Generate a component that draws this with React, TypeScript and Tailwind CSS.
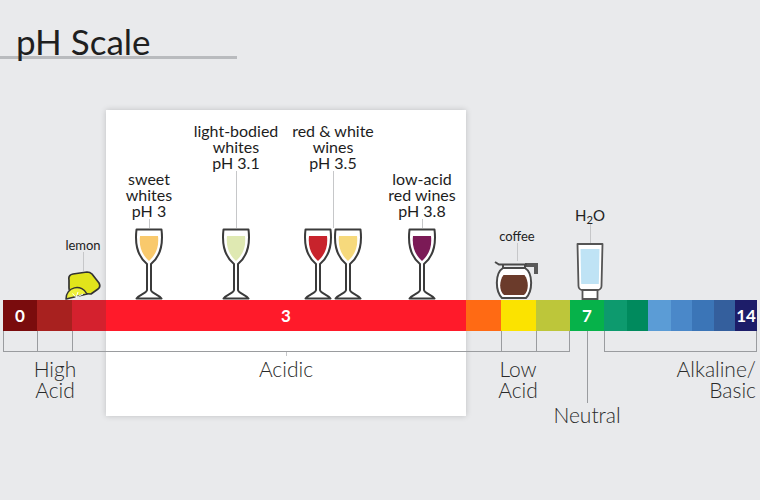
import React from "react"

const LINE = "border-[#9a9c9f]"

const segments = [
  { w: "w-[34px]", bg: "bg-[#7a0c0d]", label: "0" },
  { w: "w-[35px]", bg: "bg-[#a8211f]", label: "" },
  { w: "w-[34px]", bg: "bg-[#d4212e]", label: "" },
  { w: "w-[360px]", bg: "bg-[#ff1a2a]", label: "3" },
  { w: "w-[35px]", bg: "bg-[#ff6a14]", label: "" },
  { w: "w-[35px]", bg: "bg-[#fbe300]", label: "" },
  { w: "w-[34px]", bg: "bg-[#bdc63a]", label: "" },
  { w: "w-[34px]", bg: "bg-[#06b24a]", label: "7" },
  { w: "w-[23px]", bg: "bg-[#0d9a6e]", label: "" },
  { w: "w-[21px]", bg: "bg-[#008a5d]", label: "" },
  { w: "w-[23px]", bg: "bg-[#5b9cd6]", label: "" },
  { w: "w-[21px]", bg: "bg-[#4a88c9]", label: "" },
  { w: "w-[22px]", bg: "bg-[#3b75b7]", label: "" },
  { w: "w-[21px]", bg: "bg-[#345f9d]", label: "" },
  { w: "w-[22px]", bg: "bg-[#1d1d69]", label: "14" },
]

function WineGlass({ fill }: { fill: string }) {
  return (
    <svg width="30" height="72" viewBox="0 0 30 72" className="block">
      <path
        d="M2.5 1.5H27.5C29 14 28 27 17 36V62C17 65 24 66 27.5 70.5H2.5C6 66 13 65 13 62V36C2 27 1 14 2.5 1.5Z"
        fill="white"
        stroke="#3b3b3b"
        strokeWidth="2"
        strokeLinejoin="round"
      />
      <path d="M6 8H24C25 17 23 26 15 33C7 26 5 17 6 8Z" fill={fill} />
    </svg>
  )
}

function Lemon() {
  return (
    <svg width="38" height="29" viewBox="0 0 38 29" className="block">
      <path
        d="M5 9Q4 4 9 3L23 1Q26 1 28 3L35 12Q37 16 34 18L27 23L9 22Q5 21 5 17Z"
        fill="#e1e41b"
        stroke="#333"
        strokeWidth="1.7"
        strokeLinejoin="round"
      />
      <path d="M2 28A11 11 0 0 1 23 23Z" fill="#eef03a" stroke="#333" strokeWidth="1.5" strokeLinejoin="round" />
      <path d="M12 26.5L8.5 22.5M12 26.5L14 21M12 26.5L19 23" stroke="white" strokeWidth="1" />
    </svg>
  )
}

function CoffeePot() {
  return (
    <svg width="46" height="39" viewBox="0 0 46 39" className="block">
      <path d="M31 2H44V13H40V6H31Z" fill="#5a5a5a" />
      <path d="M1 1L5 3.5H33" stroke="#4a4a4a" strokeWidth="2" fill="none" />
      <path d="M9 3.5V7M31 3.5V7" stroke="#4a4a4a" strokeWidth="2" />
      <path
        d="M9 7C1 12 1 30 8 37H32C39 30 39 12 31 7Z"
        fill="white"
        stroke="#4a4a4a"
        strokeWidth="2"
        strokeLinejoin="round"
      />
      <path d="M9.5 14C5 20 5 30 10 34H30C35 30 35 20 30.5 14Z" fill="#6b3b2b" />
    </svg>
  )
}

function WaterGlass() {
  return (
    <svg width="28" height="57" viewBox="0 0 28 57" className="block">
      <path d="M6.5 47H21.5V56H6.5Z" fill="white" stroke="#555" strokeWidth="1.8" />
      <path
        d="M1.5 1H26.5L25.5 43C25.5 45.5 23.5 47 21.5 47H6.5C4.5 47 2.5 45.5 2.5 43Z"
        fill="white"
        stroke="#555"
        strokeWidth="1.8"
        strokeLinejoin="round"
      />
      <path d="M4.5 6H23.5L22.8 41H5.2Z" fill="#bfe3f5" />
    </svg>
  )
}

const labelText = "text-center text-[16px] leading-[16px] text-[#1d1d1d]"
const connector = "w-px bg-[#c6c7c9]"

export default function App() {
  return (
    <div className="h-[500px] w-[760px] overflow-hidden bg-[#e9eaec] font-['Lato','Liberation_Sans',sans-serif] text-[#222]">
      {/* title */}
      <header className="relative h-[60px]">
        <div className="absolute left-0 top-[56px] h-[3px] w-[237px] bg-[#b9bbbe]" />
        <h1 className="relative pl-[16px] pt-[20px] text-[35px] leading-[42px] text-[#1f1f1f]">pH Scale</h1>
      </header>

      <div className="relative h-[440px]">
        {/* highlight box */}
        <div className="absolute left-[106px] top-[50px] h-[306px] w-[360px] bg-white shadow-[0_0_6px_rgba(0,0,0,0.18)]" />

        {/* markers above the scale */}
        <div className="relative h-[240px]">
          <div className="absolute bottom-0 left-[62px] flex w-[42px] flex-col items-center">
            <span className="text-[13px] leading-[14px]">lemon</span>
            <span className={`h-[19px] ${connector}`} />
            <Lemon />
          </div>

          <div className="absolute bottom-0 left-[104px] flex w-[90px] flex-col items-center">
            <p className={labelText}>
              sweet
              <br />
              whites
              <br />
              pH 3
            </p>
            <span className={`h-[9px] ${connector}`} />
            <WineGlass fill="#f9c96c" />
          </div>

          <div className="absolute bottom-0 left-[186px] flex w-[100px] flex-col items-center">
            <p className={labelText}>
              light-bodied
              <br />
              whites
              <br />
              pH 3.1
            </p>
            <span className={`h-[57px] ${connector}`} />
            <WineGlass fill="#dfe9b2" />
          </div>

          <div className="absolute bottom-0 left-[283px] flex w-[100px] flex-col items-center">
            <p className={labelText}>
              red &amp; white
              <br />
              wines
              <br />
              pH 3.5
            </p>
            <span className={`h-[57px] ${connector}`} />
            <div className="flex">
              <WineGlass fill="#c8232c" />
              <WineGlass fill="#f6d97c" />
            </div>
          </div>

          <div className="absolute bottom-0 left-[377px] flex w-[90px] flex-col items-center">
            <p className={labelText}>
              low-acid
              <br />
              red wines
              <br />
              pH 3.8
            </p>
            <span className={`h-[9px] ${connector}`} />
            <WineGlass fill="#7b1a56" />
          </div>

          <div className="absolute bottom-0 left-[492px] flex w-[50px] flex-col items-center">
            <span className="text-[13px] leading-[14px]">coffee</span>
            <span className={`h-[18px] ${connector}`} />
            <CoffeePot />
          </div>

          <div className="absolute bottom-0 left-[570px] flex w-[40px] flex-col items-center">
            <span className="text-[15px] leading-[16px]">
              H<sub>2</sub>O
            </span>
            <span className={`h-[20px] ${connector}`} />
            <WaterGlass />
          </div>
        </div>

        {/* colour scale */}
        <div className="relative ml-[3px] flex h-[31px] w-[754px]">
          {segments.map((s, i) => (
            <div
              key={i}
              className={`${s.w} ${s.bg} flex items-center justify-center text-[17px] font-bold text-white`}
            >
              {s.label}
            </div>
          ))}
        </div>

        {/* brackets */}
        <div className="relative ml-[3px] flex h-[21px]">
          <div className={`flex w-[567px] border-b ${LINE}`}>
            <div className={`w-[34px] border-l ${LINE}`} />
            <div className={`w-[35px] border-l ${LINE}`} />
            <div className={`w-[34px] border-l ${LINE}`} />
            <div className="w-[360px]" />
            <div className="w-[35px]" />
            <div className={`w-[35px] border-l ${LINE}`} />
            <div className={`w-[34px] border-x ${LINE}`} />
          </div>
          <div className="w-[34px]" />
          <div className={`w-[153px] border-x border-b ${LINE}`} />
        </div>

        {/* labels */}
        <div className="relative h-[148px] text-[21px] font-light leading-[21px] text-[#2a2a2a]">
          <div className="absolute left-[286px] top-0 h-[4px] w-px bg-[#c6c7c9]" />
          <p className="absolute left-[15px] top-[6px] w-[80px] text-center">
            High
            <br />
            Acid
          </p>
          <p className="absolute left-[246px] top-[6px] w-[80px] text-center">Acidic</p>
          <p className="absolute left-[478px] top-[6px] w-[80px] text-center">
            Low
            <br />
            Acid
          </p>
          <p className="absolute left-[542px] top-[52px] w-[90px] text-center">Neutral</p>
          <p className="absolute right-[4px] top-[6px] text-right">
            Alkaline/
            <br />
            Basic
          </p>
        </div>

        {/* neutral pointer */}
        <div className="absolute left-[587px] top-[271px] h-[72px] w-px bg-[#9a9c9f]" />
      </div>
    </div>
  )
}
